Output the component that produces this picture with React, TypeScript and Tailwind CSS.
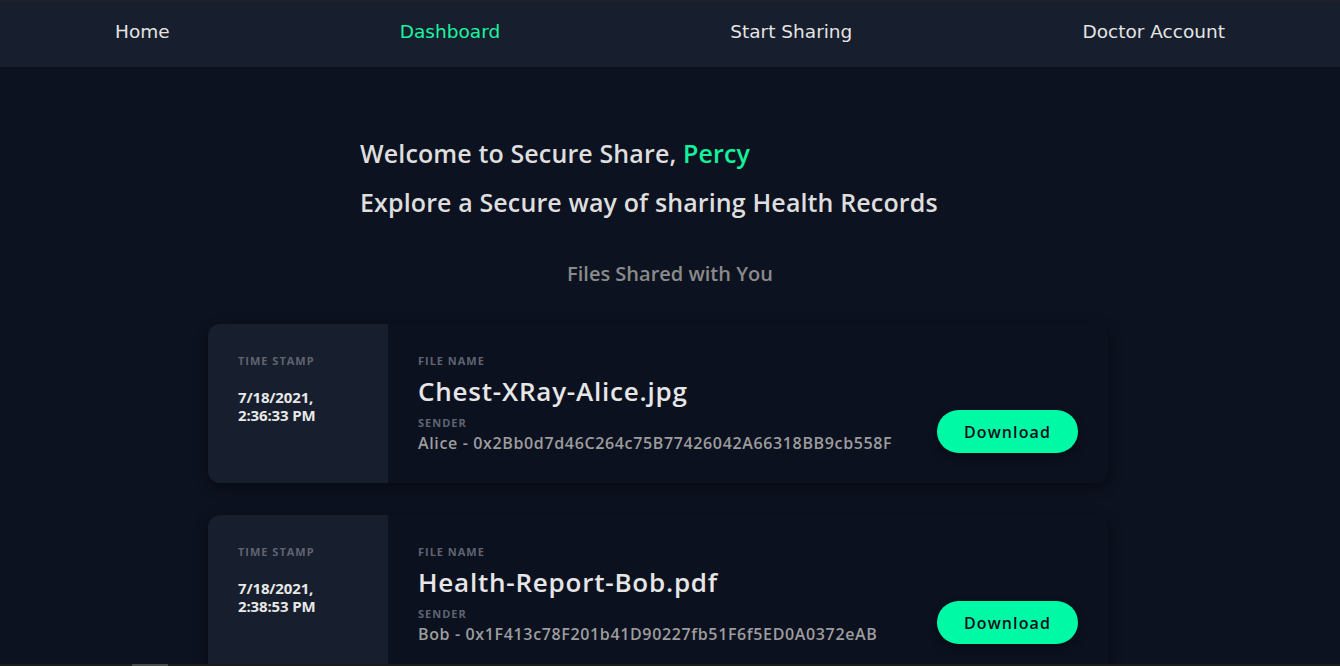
import React from "react";

const files = [
  {
    date: "7/18/2021,",
    time: "2:36:33 PM",
    name: "Chest-XRay-Alice.jpg",
    sender: "Alice - 0x2Bb0d7d46C264c75B77426042A66318BB9cb558F",
  },
  {
    date: "7/18/2021,",
    time: "2:38:53 PM",
    name: "Health-Report-Bob.pdf",
    sender: "Bob - 0x1F413c78F201b41D90227fb51F6f5ED0A0372eAB",
  },
];

const navItems = ["Home", "Dashboard", "Start Sharing", "Doctor Account"];

const sans = "font-['Open_Sans',sans-serif]";

function FileCard({ f }: { f: (typeof files)[number] }) {
  return (
    <div className="flex h-[159px] w-[900px] rounded-xl bg-[#0c1120] shadow-[0_4px_14px_rgba(0,0,0,0.45)]">
      {/* time stamp side */}
      <div className="w-[180px] shrink-0 rounded-l-xl bg-[#171e2d] pl-[30px] pt-[29px]">
        <div className="text-[11px] font-bold tracking-[0.09em] text-[#5f6470]">TIME STAMP</div>
        <div className="mt-[18px] text-[15px] font-bold leading-[18px] tracking-[-0.01em] text-[#e8e8e8]">
          <div>{f.date}</div>
          <div>{f.time}</div>
        </div>
      </div>

      {/* file info */}
      <div className="flex flex-1 items-start justify-between pl-[30px] pr-[30px] pt-[29px]">
        <div>
          <div className="text-[11px] font-bold tracking-[0.09em] text-[#5f6470]">FILE NAME</div>
          <div className="mt-[5px] text-[26px] font-semibold leading-[32px] tracking-[0.03em] text-[#e6e6e6]">
            {f.name}
          </div>
          <div className="mt-[8px] text-[11px] font-bold tracking-[0.09em] text-[#5f6470]">SENDER</div>
          <div className="text-[16px] font-semibold tracking-[0.04em] text-[#9d9d9d]">{f.sender}</div>
        </div>
        <button className="mt-[57px] h-[43px] w-[141px] rounded-full bg-[#00f9a4] text-[16px] font-semibold tracking-[0.07em] text-[#0b0f1a] shadow-[0_4px_10px_rgba(0,0,0,0.4)]">
          Download
        </button>
      </div>
    </div>
  );
}

export default function App() {
  return (
    <div className={`flex h-[666px] w-[1340px] flex-col overflow-hidden bg-[#0d1220] ${sans}`}>
      {/* nav */}
      <nav className="flex h-[67px] shrink-0 items-center justify-around border-t-2 border-[#1e2129] bg-[#171e2d] pb-[5px] font-['DejaVu_Sans',sans-serif] text-[18.5px]">
        {navItems.map((item) => (
          <span key={item} className={item === "Dashboard" ? "text-[#1ef4a0]" : "text-[#e4e4e4]"}>
            {item}
          </span>
        ))}
      </nav>

      <div className="flex flex-1 flex-col items-center overflow-hidden">
        <div className="mt-[70px] w-[620px] text-[25px] font-semibold tracking-[0.005em] text-[#dedede]">
          <div className="leading-[32px]">
            Welcome to Secure Share, <span className="text-[#12f29c]">Percy</span>
          </div>
          <div className="mt-[17px] leading-[32px]">Explore a Secure way of sharing Health Records</div>
        </div>

        <div className="mt-[41px] text-[20px] font-semibold leading-[30px] text-[#8a8a8a]">Files Shared with You</div>

        <div className="mt-[35px] flex flex-col gap-[32px] pr-[24px]">
          {files.map((f) => (
            <FileCard key={f.name} f={f} />
          ))}
        </div>
      </div>

      {/* horizontal scrollbar strip */}
      <div className="relative h-[2px] shrink-0 bg-[#1c1c1c]">
        <div className="absolute left-[132px] top-0 h-[2px] w-[36px] bg-[#4a4a4a]" />
      </div>
    </div>
  );
}
